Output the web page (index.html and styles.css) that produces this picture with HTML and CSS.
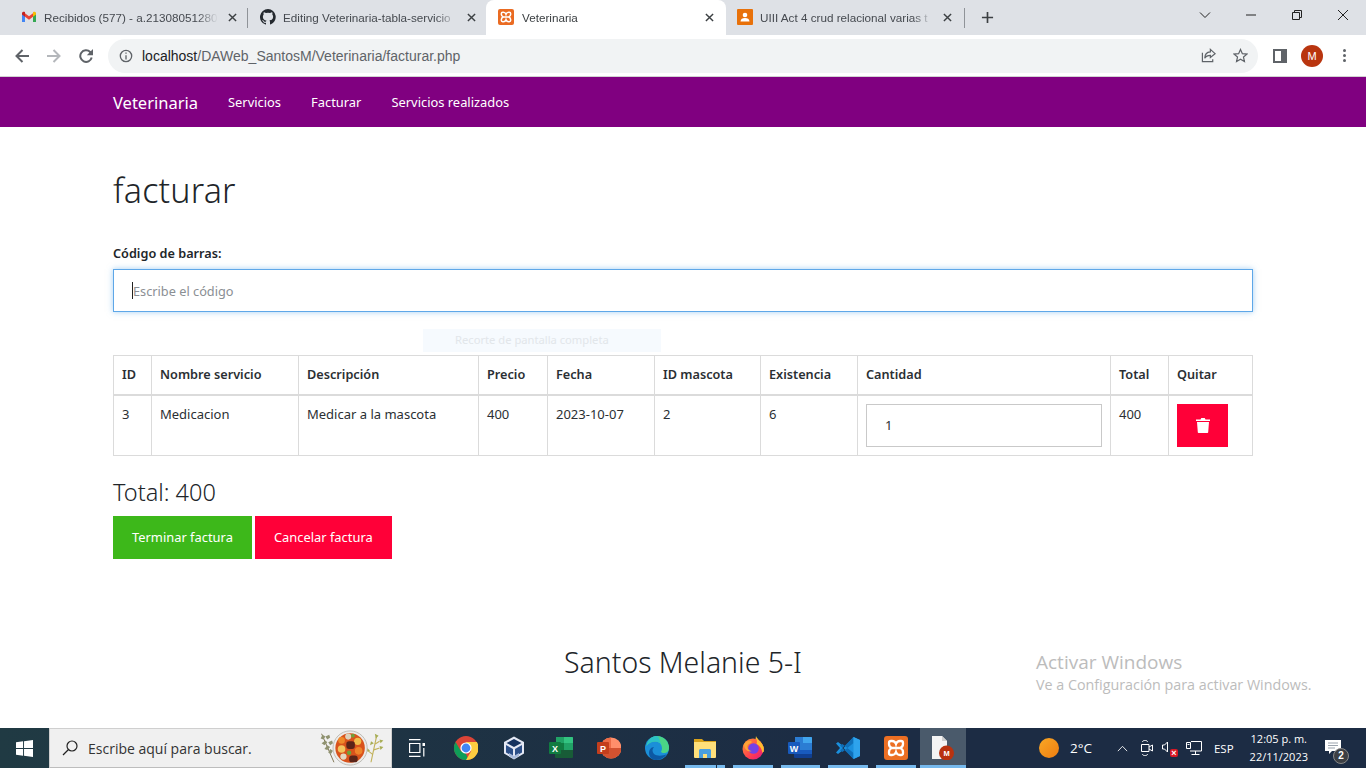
FILE: index.html
```html
<!DOCTYPE html>
<html lang="es">
<head>
<meta charset="utf-8">
<title>Veterinaria</title>
<link rel="stylesheet" href="styles.css">
</head>
<body>
<div class="screen">
  <header class="browser">
    <div class="tabstrip">
      <div class="tab">
        <svg class="fav" viewBox="0 0 16 16"><path fill="#4285f4" d="M1 3.500v9.500h3V6z"/><path fill="#34a853" d="M15 3.500v9.500h-3V6z"/><path fill="#ea4335" d="M4 4.200L8 7.300l4-3.100v3.600L8 10.800 4 7.800z"/><path fill="#c5221f" d="M1 4.500C1 3 2.700 2.300 4 3.200v4.600L1 5.600z"/><path fill="#fbbc04" d="M15 4.500C15 3 13.300 2.300 12 3.200v4.600l3-2.200z"/></svg>
        <span class="tab-title">Recibidos (577) - a.21308051280</span>
        <svg class="tab-x" viewBox="0 0 10 10"><path d="M1 1l8 8M9 1l-8 8"/></svg>
      </div>
      <i class="tab-sep"></i>
      <div class="tab">
        <svg class="fav" viewBox="0 0 16 16"><path fill="#24292f" d="M8 0a8 8 0 0 0-2.500 15.600c.4.100.5-.2.500-.4v-1.400c-2.200.5-2.700-1-2.700-1-.4-.9-.9-1.200-.9-1.200-.7-.5.100-.5.100-.5.800.100 1.200.8 1.200.8.700 1.200 1.900.9 2.300.7.100-.5.300-.9.500-1.100-1.800-.2-3.600-.9-3.600-4 0-.9.300-1.600.8-2.100-.1-.2-.4-1 .1-2.100 0 0 .7-.2 2.200.8a7.500 7.500 0 0 1 4 0c1.500-1 2.200-.8 2.200-.8.400 1.100.200 1.900.100 2.100.500.500.800 1.300.800 2.100 0 3.100-1.900 3.700-3.700 3.900.300.300.600.800.600 1.500v2.200c0 .2.100.5.500.4A8 8 0 0 0 8 0z"/></svg>
        <span class="tab-title">Editing Veterinaria-tabla-servicio</span>
        <svg class="tab-x" viewBox="0 0 10 10"><path d="M1 1l8 8M9 1l-8 8"/></svg>
      </div>
      <div class="tab tab-active">
        <svg class="fav" viewBox="0 0 24 24"><rect width="24" height="24" rx="3" fill="#ea6b22"/><path class="xampp" d="M12 8Q11 5 8 5H7Q5 5 5 7V8Q5 11 8 12 5 13 5 16V17Q5 19 7 19H8Q11 19 12 16 13 19 16 19H17Q19 19 19 17V16Q19 13 16 12 19 11 19 8V7Q19 5 17 5H16Q13 5 12 8ZM8 12H16"/></svg>
        <span class="tab-title">Veterinaria</span>
        <svg class="tab-x" viewBox="0 0 10 10"><path d="M1 1l8 8M9 1l-8 8"/></svg>
      </div>
      <div class="tab tab-last">
        <svg class="fav" viewBox="0 0 16 16"><rect width="16" height="16" rx="1" fill="#e8710a"/><circle cx="8" cy="6" r="2.300" fill="#fff"/><path fill="#fff" d="M3.500 12.500c0-2.500 2-3.500 4.500-3.500s4.500 1 4.500 3.500z"/></svg>
        <span class="tab-title">UIII Act 4 crud relacional varias t</span>
        <svg class="tab-x" viewBox="0 0 10 10"><path d="M1 1l8 8M9 1l-8 8"/></svg>
      </div>
      <i class="tab-sep tab-sep-end"></i>
      <svg class="tab-new" viewBox="0 0 14 14"><path d="M7 1v12M1 7h12"/></svg>
      <div class="winctl">
        <svg class="winbtn" viewBox="0 0 12 12"><path d="M1 3.500l5 5 5-5"/></svg>
        <svg class="winbtn" viewBox="0 0 12 12"><path d="M1 6h10"/></svg>
        <svg class="winbtn" viewBox="0 0 12 12"><path d="M1.500 3.500h7v7h-7zM3.500 3.500v-2h7v7h-2"/></svg>
        <svg class="winbtn" viewBox="0 0 12 12"><path d="M1 1l10 10M11 1L1 11"/></svg>
      </div>
    </div>
    <div class="toolbar">
      <svg class="nav-ic" viewBox="0 0 14 14"><path stroke="#5f6368" d="M14 7H1.500M7.500 1L1.500 7l6 6"/></svg>
      <svg class="nav-ic" viewBox="0 0 14 14"><path stroke="#b4b7bb" d="M0 7h12.500M6.500 1l6 6-6 6"/></svg>
      <svg class="nav-ic" viewBox="0 0 14 14"><path stroke="#5f6368" d="M12.700 8.500A5.800 5.800 0 1 1 11.200 3L13 5"/><path fill="#5f6368" d="M14 0v6.200H7.800z"/></svg>
      <div class="omnibox">
        <svg class="info" viewBox="0 0 16 16"><circle cx="8" cy="8" r="6.500"/><path d="M8 7v5M8 4v1.500"/></svg>
        <span class="url"><span class="url-host">localhost</span>/DAWeb_SantosM/Veterinaria/facturar.php</span>
        <svg class="omni-ic" viewBox="0 0 16 16"><path d="M10 1.500L15 6l-5 4V7.800C7 7.800 5 9 4 11c0-4 2-6.500 6-6.800zM1.500 5v9.500h11V12"/></svg>
        <svg class="omni-ic" viewBox="0 0 16 16"><path d="M8 1.500l2 4.500 4.800.5-3.600 3.200 1 4.800L8 12l-4.200 2.500 1-4.800L1.200 6.500 6 6z"/></svg>
      </div>
      <svg class="side-ic" viewBox="0 0 14 14"><rect x="1" y="1" width="12" height="12" fill="none" stroke="#5f6368" stroke-width="2"/><rect x="8" y="1" width="5" height="12" fill="#5f6368"/></svg>
      <span class="avatar">M</span>
      <span class="menu-dots"><i></i><i></i><i></i></span>
    </div>
  </header>

  <nav class="navbar">
    <a class="brand">Veterinaria</a>
    <a class="nav-link">Servicios</a>
    <a class="nav-link">Facturar</a>
    <a class="nav-link">Servicios realizados</a>
  </nav>

  <main class="content">
    <h1 class="title">facturar</h1>
    <label class="field-label">Código de barras:</label>
    <div class="code-input"><i class="caret"></i><span class="placeholder">Escribe el código</span></div>
    <table class="grid">
      <colgroup>
        <col class="c-id"><col class="c-name"><col class="c-desc"><col class="c-price"><col class="c-date"><col class="c-pet"><col class="c-stock"><col class="c-qty"><col class="c-total"><col class="c-del">
      </colgroup>
      <thead>
        <tr><th>ID</th><th>Nombre servicio</th><th>Descripción</th><th>Precio</th><th>Fecha</th><th>ID mascota</th><th>Existencia</th><th>Cantidad</th><th>Total</th><th>Quitar</th></tr>
      </thead>
      <tbody>
        <tr>
          <td>3</td><td>Medicacion</td><td>Medicar a la mascota</td><td>400</td><td>2023-10-07</td><td>2</td><td>6</td>
          <td><div class="qty">1</div></td>
          <td>400</td>
          <td><div class="btn-del"><svg class="trash" viewBox="0 0 14 16"><path d="M0 2.500h14V4H0zM4.500 2.500L5.300 1h3.400l.8 1.500zM1 5h12l-.8 10.200a.8.800 0 0 1-.8.800H2.600a.8.800 0 0 1-.8-.8z"/></svg></div></td>
        </tr>
      </tbody>
    </table>
    <h3 class="total">Total: 400</h3>
    <div class="actions">
      <a class="btn btn-ok">Terminar factura</a>
      <a class="btn btn-no">Cancelar factura</a>
    </div>
    <footer class="signature">Santos Melanie 5-I</footer>
    <div class="snip-tip">Recorte de pantalla completa</div>
    <div class="activate">
      <div class="activate-a">Activar Windows</div>
      <div class="activate-b">Ve a Configuración para activar Windows.</div>
    </div>
  </main>

  <footer class="taskbar">
    <span class="start"><svg viewBox="0 0 18 18"><path fill="#fff" d="M0 2.500L7.500 1.400V8.500H0zM8.500 1.300L18 0v8.500H8.500zM0 9.500h7.500v7.100L0 15.500zM8.500 9.500H18V18l-9.500-1.300z"/></svg></span>
    <div class="search">
      <svg class="lens" viewBox="0 0 16 16"><circle cx="10" cy="6" r="5"/><path d="M6.500 9.500L1 15"/></svg>
      <span class="search-text">Escribe aquí para buscar.</span>
      <svg class="stew" viewBox="0 0 72 40">
        <path d="M4 5l13 30" stroke="#7d7350" stroke-width="1" fill="none"/>
        <path d="M5 6l-2 4 3 1 2-3zM8 12l-4 3 3 2 3-3zM10 17l-3 4 3 1 3-3zM8 8l4-2 1 3-3 2zM11 14l4-2 1 3-3 2zM13 21l-2 4 3 1 2-3z" fill="#8f9270"/>
        <path d="M62 7l-3 14-3 14M60 16l5-3M59 22l6-2M58 27l-5-4" stroke="#c2b25c" stroke-width="1.200" fill="none"/>
        <path d="M60 5l4 2-3 3zM65 11l4 1-3 3zM65 18l4 1-3 3zM52 20l3 3-4 1zM56 13l3 2-4 2z" fill="#a7ad55"/>
        <circle cx="34" cy="20" r="18" fill="#ecebe8" stroke="#bdbab5"/>
        <circle cx="34" cy="20" r="15.500" fill="#d9531c"/>
        <circle cx="25" cy="12" r="3.500" fill="#ef8a2a"/><circle cx="32" cy="8" r="3.200" fill="#ddd2bc"/><circle cx="37" cy="7" r="2" fill="#6fa33a"/><circle cx="42" cy="13" r="3.800" fill="#f2bd4b"/><rect x="30" y="13" width="9" height="8" rx="3" fill="#5b2418"/><circle cx="25" cy="21" r="4" fill="#f3c45e"/><circle cx="43" cy="23" r="4" fill="#ef842a"/><circle cx="33" cy="25" r="2.300" fill="#6fa33a"/><circle cx="27" cy="29" r="3.300" fill="#e3d8c2"/><rect x="33" y="28" width="9" height="7" rx="3" fill="#5b2418"/>
      </svg>
    </div>
    <span class="tb-view"><svg viewBox="0 0 16 18"><path fill="none" stroke="#fff" stroke-width="1.200" d="M0 .6h11.500M.6 4.500h10.300v9H.6zM0 17.400h11.500M14.800 9v8.500"/><rect x="13.500" y="4" width="3" height="3" fill="#fff"/></svg></span>
    <span class="tb-app"><svg viewBox="0 0 24 24"><circle cx="12" cy="12" r="12" fill="#db4437"/><path fill="#0f9d58" d="M12 24A12 12 0 0 1 1.600 6l5.200 9 5.200 3 2.500 5.700z"/><path fill="#ffcd40" d="M12 6h10.900A12 12 0 0 1 12 24l5.200-9z"/><circle cx="12" cy="12" r="5.600" fill="#fff"/><circle cx="12" cy="12" r="4.400" fill="#4285f4"/></svg></span>
    <span class="tb-app"><svg viewBox="0 0 24 24"><path fill="#e4e8f4" d="M12 .5l10 5.500v11.500L12 23.500 2 17.500V6z"/><path fill="#14315f" d="M12 3l7.500 4-7.500 4-7.500-4z"/><path fill="#2c4f88" d="M4 9l7 4v7.500l-7-4zM20 9l-7 4v7.500l7-4z"/><path fill="#a9bbdc" d="M7 17l5 3 5-3 0 3-5 3-5-3z"/></svg></span>
    <span class="tb-app"><svg viewBox="0 0 24 24"><path fill="#21a366" d="M7 1h16a1 1 0 0 1 1 1v5H7z"/><path fill="#33c481" d="M15 1h8a1 1 0 0 1 1 1v5h-9z"/><rect x="6" y="7" width="18" height="7" fill="#107c41"/><rect x="15" y="7" width="9" height="7" fill="#21a366"/><path fill="#185c37" d="M6 14h18v7a1 1 0 0 1-1 1H7a1 1 0 0 1-1-1z"/><rect y="6" width="12" height="12" rx="1" fill="#107c41"/><text class="ic-letter" x="6" y="15.500">X</text></svg></span>
    <span class="tb-app"><svg viewBox="0 0 24 24"><circle cx="14" cy="12" r="10.500" fill="#ff8f6b"/><path fill="#d35230" d="M14 12h10.500A10.500 10.500 0 0 1 3.500 12z"/><path fill="#ed6c47" d="M14 12V1.500A10.500 10.500 0 0 0 3.500 12z"/><rect y="6" width="12" height="12" rx="1" fill="#c43e1c"/><text class="ic-letter" x="6" y="15.500">P</text></svg></span>
    <span class="tb-app"><svg viewBox="0 0 24 24"><circle cx="12" cy="12" r="12" fill="#1b8fd8"/><path fill="#4bd486" d="M12 0a12 12 0 0 1 12 12c0 3-2 5-5 5-2 0-3-.6-3-1.500 0-.5 1-.8 1-3C17 8 14 5.500 10 5.500 6.500 5.500 3.500 7 1.500 10 2.500 4 7 0 12 0z"/><path fill="#2cc2c6" d="M12 0C7 0 2.500 4 1.500 10 3.500 7 6.500 5.500 10 5.500c3 0 5.500 1.500 6.500 4C15 5 14 1 12 0z"/><path fill="#0c59a4" d="M22 18c-3 4-7 6-11 6-4 0-7-3-7-7 0-3 2-6 5-6-2 2-2 5 0 7 3 2.500 9 2 13 0z"/></svg></span>
    <span class="tb-app tb-app-split"><svg viewBox="0 0 24 24"><path fill="#d9a21b" d="M1 3h8l2 2h12v4H1z"/><path fill="#ffdf7a" d="M1 6h22v15a1 1 0 0 1-1 1H2a1 1 0 0 1-1-1z"/><path fill="#4a9fe0" d="M6 22v-8l1-1h10l1 1v8h-4v-4h-4v4z"/></svg></span>
    <span class="tb-app"><svg viewBox="0 0 24 24"><defs><linearGradient id="fx" x1="0" y1="0" x2="1" y2="1"><stop offset="0" stop-color="#ff9a2e"/><stop offset=".6" stop-color="#ff3d50"/><stop offset="1" stop-color="#e31587"/></linearGradient></defs><path fill="#ffd03a" d="M15 0c.5 3 6 6 7.500 11 .5 2 .5 4 0 5H13z"/><circle cx="12" cy="13" r="10.500" fill="url(#fx)"/><path fill="#ffbd2e" d="M15 0c.5 3 6 6 7.500 11 .5 2 0 5-1 6-1-6-4-8-6-9 1-2 0-5-.5-8z"/><circle cx="12.500" cy="12.500" r="5.300" fill="#7542e5"/><path fill="#ffa436" d="M3 8c2-3 5-4 7-3 1 .5 1 1.500 0 2-2 1-4 1.500-3.500 4.500.3 2 2 3.500 4.500 3.500-3.500 1.500-8-1-8-7z"/></svg></span>
    <span class="tb-app"><svg viewBox="0 0 24 24"><path fill="#2b7cd3" d="M7 1h16a1 1 0 0 1 1 1v5H7z"/><path fill="#41a5ee" d="M15 1h8a1 1 0 0 1 1 1v5h-9z"/><rect x="6" y="7" width="18" height="7" fill="#2b7cd3"/><rect x="6" y="14" width="18" height="4" fill="#185abd"/><path fill="#103f91" d="M6 18h18v3a1 1 0 0 1-1 1H7a1 1 0 0 1-1-1z"/><rect y="6" width="12" height="12" rx="1" fill="#185abd"/><text class="ic-letter" x="6" y="15.500">W</text></svg></span>
    <span class="tb-app"><svg viewBox="0 0 24 24"><path fill="#1a8fdd" d="M6.500 14.500L2 18l-2-1.500L4 12 0 7.500 2 6l4.500 3.500zM17.500 1L24 4v16l-6.500 3L7.500 12z"/><path fill="#0f6fb8" d="M17.500 23L4 9.500 6.500 8 17.500 17zM17.500 1L4 14.500 6.500 16 17.500 7z"/><path fill="#2ea3ec" d="M17.500 1L24 4v16l-6.500 3z"/></svg></span>
    <span class="tb-app"><svg viewBox="0 0 24 24"><rect width="24" height="24" rx="3" fill="#ec6f23"/><path class="xampp" d="M12 8Q11 5 8 5H7Q5 5 5 7V8Q5 11 8 12 5 13 5 16V17Q5 19 7 19H8Q11 19 12 16 13 19 16 19H17Q19 19 19 17V16Q19 13 16 12 19 11 19 8V7Q19 5 17 5H16Q13 5 12 8ZM8 12H16"/></svg></span>
    <span class="tb-app tb-app-active"><svg viewBox="0 0 24 24"><path fill="#f4f4f4" d="M1 0h10l5 5v18H1z"/><path fill="#cfcfcf" d="M11 0l5 5h-5z"/><circle cx="15.500" cy="17" r="7.500" fill="#b9320f"/><text class="ic-m" x="15.500" y="19.800">M</text></svg></span>
    <div class="tray">
      <i class="sun"></i>
      <span class="temp">2°C</span>
      <svg class="tray-ic tray-chev" viewBox="0 0 12 8"><path d="M.7 7L6 1.500 11.300 7"/></svg>
      <svg class="tray-ic tray-meet" viewBox="0 0 12 16"><path d="M1.500 2c0-1 1-1.500 2-1.500h1c1 0 2 .5 2 1.500M1.500 14c0 1 1 1.500 2 1.500h1c1 0 2-.5 2-1.500M.5 4.500h7.500v7H.5zM8 7l3.500-2v6L8 9"/></svg>
      <span class="tray-sound"><svg class="tray-ic tray-spk" viewBox="0 0 6 12"><path d="M.5 4h2L5.500 1v10L2.500 8h-2z"/></svg><i class="mute">×</i></span>
      <svg class="tray-ic tray-net" viewBox="0 0 16 14"><path d="M5 .5h10.500v9.500H4M9.500 10v3M5.500 13.500h8M.5 1.500h4v6h-4zM1.500 3.500h2"/></svg>
      <span class="lang">ESP</span>
      <span class="clock"><span>12:05 p. m.</span><span>22/11/2023</span></span>
      <span class="notif"><svg viewBox="0 0 16 14"><path fill="#fff" d="M0 0h16v11H7l-3 3v-3H0z"/><path stroke="#9aa3ad" d="M3 3h10M3 5.500h10M3 8h7"/></svg><b class="notif-n">2</b></span>
    </div>
  </footer>
</div>
</body>
</html>
```

FILE: styles.css
```css
* { box-sizing: border-box; }
html, body { margin: 0; padding: 0; }
body { font-family: "Noto Sans", "Open Sans", sans-serif; color: #212529; background: #fff; }
.screen { width: 1366px; height: 768px; display: flex; flex-direction: column; overflow: hidden; }

/* browser chrome */
.browser { font-family: "Liberation Sans", Arial, sans-serif; flex: none; }
.tabstrip { height: 35px; background: #dee1e6; display: flex; align-items: center; padding-left: 9px; }
.tab { width: 238px; height: 35px; display: flex; align-items: center; padding: 0 6px 1px 12px; flex: none; }
.tab-active { width: 240px; background: #fff; border-radius: 8px 8px 0 0; padding: 0 8px 1px 12px; }
.tab-last { padding: 0 8px 1px 11px; }
.fav { width: 16px; height: 16px; flex: none; margin-right: 7px; }
.tab-title { flex: 1; font-size: 11.700px; color: #45494f; white-space: nowrap; overflow: hidden; min-width: 0;
  -webkit-mask-image: linear-gradient(90deg, #000 88%, transparent); mask-image: linear-gradient(90deg, #000 88%, transparent); }
.tab-active .tab-title { color: #3c4043; margin-left: 1px; }
.tab-x { width: 9px; height: 9px; flex: none; margin: 0 4px 0 10px; fill: none; stroke: #3c4043; stroke-width: 1.600; }
.xampp { fill: none; stroke: #fff; stroke-width: 2.300; }
.tab-sep { width: 1px; height: 20px; background: #8f9398; flex: none; }
.tab-new { width: 13px; height: 13px; margin-left: 16px; fill: none; stroke: #3c4043; stroke-width: 1.800; flex: none; }
.winctl { margin-left: auto; display: flex; align-items: center; gap: 34px; padding-right: 17px; padding-bottom: 5px; }
.winbtn { width: 12px; height: 12px; fill: none; stroke: #222; stroke-width: 1; }

.toolbar { height: 42px; background: #fff; border-bottom: 1px solid #d2d2d2; display: flex; align-items: center; padding-left: 15px; }
.nav-ic { width: 14px; height: 14px; margin-right: 18px; fill: none; stroke-width: 2; flex: none; }
.omnibox { width: 1150px; height: 34px; margin-left: -3px; border-radius: 17px; background: #f1f3f4; display: flex; align-items: center; padding: 0 10px 0 11px; flex: none; }
.info { width: 14px; height: 14px; fill: none; stroke: #5f6368; stroke-width: 1.500; margin-right: 9px; flex: none; }
.url { font-size: 14px; color: #5f6368; flex: 1; }
.url-host { color: #202124; }
.omni-ic { width: 15px; height: 15px; fill: none; stroke: #5f6368; stroke-width: 1.300; margin-left: 17px; flex: none; }
.side-ic { width: 14px; height: 14px; margin-left: 15px; flex: none; }
.avatar { width: 22px; height: 22px; margin-left: 14px; border-radius: 50%; background: #b9350f; color: #fff; font-size: 11px; display: flex; align-items: center; justify-content: center; flex: none; }
.menu-dots { margin-left: 20px; display: flex; flex-direction: column; gap: 2px; }
.menu-dots i { width: 3px; height: 3px; border-radius: 50%; background: #5f6368; display: block; }

/* navbar */
.navbar { height: 50px; background: #800080; color: #fff; display: flex; align-items: center; padding-left: 113px; flex: none; }
.brand { font-size: 16.500px; margin-right: 30px; }
.nav-link { font-size: 12.900px; margin-right: 30px; }

/* content */
.content { position: relative; flex: 1; padding: 0 113px; min-height: 0; }
.title { font-size: 34px; font-weight: 300; margin: 42px 0 0; line-height: 42px; letter-spacing: .2px; }
.field-label { display: block; font-size: 12.700px; font-weight: 600; margin-top: 32px; line-height: 20px; }
.code-input { height: 43px; margin-top: 6px; border: 1px solid #5ea7e8; box-shadow: 0 0 6px rgba(90,167,232,.55); display: flex; align-items: center; padding-left: 18px; }
.caret { width: 1px; height: 17px; background: #222; }
.placeholder { font-size: 12.750px; color: #8b8f94; }

.grid { width: 1139px; table-layout: fixed; border-collapse: collapse; margin-top: 43px; font-size: 13px; color: #2b2f33; }
.c-id { width: 38px; } .c-name { width: 147px; } .c-desc { width: 180px; } .c-price { width: 69px; } .c-date { width: 107px; }
.c-pet { width: 106px; } .c-stock { width: 97px; } .c-qty { width: 253px; } .c-total { width: 58px; } .c-del { width: 84px; }
.grid th, .grid td { border: 1px solid #dbdbdb; padding: 8px; text-align: left; vertical-align: top; line-height: 20px; }
.grid th { font-weight: 600; font-size: 12.700px; height: 39px; border-bottom-width: 2px; }
.grid td { height: 60px; }
.qty { height: 43px; border: 1px solid #c9c9c9; padding-left: 18px; display: flex; align-items: center; }
.btn-del { width: 51px; height: 43px; background: #ff0038; display: flex; align-items: center; justify-content: center; }
.trash { width: 14px; height: 16px; fill: #fff; }

.total { font-size: 23.500px; font-weight: 300; margin: 21px 0 0; line-height: 30px; }
.actions { display: flex; gap: 3px; margin-top: 9px; }
.btn { height: 43px; display: flex; align-items: center; padding: 0 19px 1px; font-size: 12.900px; color: #fff; }
.btn-ok { background: #3db81a; }
.btn-no { background: #ff0038; }
.signature { font-size: 28.400px; font-weight: 300; text-align: center; margin-top: 85px; line-height: 36px; }

.snip-tip { position: absolute; left: 423px; top: 202px; width: 238px; height: 23px; background: #f6fafe; color: #e2e6ea; font-size: 11.200px; display: flex; align-items: center; padding: 0 0 2px 32px; }
.activate { position: absolute; left: 1036px; top: 522px; font-family: "Open Sans", sans-serif; color: #bcbcbc; }
.activate-a { font-size: 19px; line-height: 26px; }
.activate-b { font-size: 14.300px; line-height: 20px; }

/* taskbar */
.taskbar { height: 40px; flex: none; display: flex; align-items: center; color: #fff; background: linear-gradient(90deg, #203a43, #1c2c44 60%); font-family: "Open Sans", sans-serif; }
.start { width: 49px; display: flex; justify-content: center; }
.start svg { width: 17px; height: 17px; }
.search { width: 343px; height: 40px; background: #f0f0f0; border: 1px solid #cfcfcf; border-bottom-color: #bdbdbd; display: flex; align-items: center; padding-left: 12px; flex: none; }
.lens { width: 16px; height: 16px; fill: none; stroke: #222; stroke-width: 1.200; flex: none; }
.search-text { color: #333; font-size: 14px; margin-left: 10px; flex: 1; }
.stew { width: 72px; height: 38px; margin-right: 3px; flex: none; }
.tb-view { width: 50px; display: flex; justify-content: center; flex: none; }
.tb-view svg { width: 16px; height: 18px; }
.tb-app { width: 47.800px; height: 40px; display: flex; align-items: center; justify-content: center; flex: none; position: relative; }
.tb-app svg { width: 24px; height: 24px; }
.tb-app:nth-of-type(n+8)::after { content: ""; position: absolute; left: 4px; right: 4px; bottom: 0; height: 3px; background: #76b9ed; }
.tb-app-split::before { content: ""; position: absolute; left: 35px; width: 1px; bottom: 0; height: 3px; background: #1c2c44; z-index: 1; }
.tb-app-active { width: 46px; background: #4a5a6b; }
.tb-app-active::after { left: 0 !important; right: 0 !important; }
.ic-letter { font: 700 9px "Liberation Sans", sans-serif; fill: #fff; text-anchor: middle; }
.ic-m { font: 700 7.500px "Liberation Sans", sans-serif; fill: #fff; text-anchor: middle; }
.tray { flex: 1; height: 40px; display: flex; align-items: center; padding-left: 73px; position: relative; }
.sun { width: 20px; height: 20px; border-radius: 50%; background: linear-gradient(135deg, #f9a825, #ee7d11); flex: none; }
.temp { font-size: 13.500px; margin-left: 11px; width: 37px; }
.tray-ic { fill: none; stroke: #fff; stroke-width: 1; flex: none; }
.tray-chev { width: 11px; height: 7px; margin-left: 10px; }
.tray-meet { width: 12px; height: 16px; margin-left: 13px; }
.tray-sound { position: relative; width: 16px; height: 16px; margin-left: 9px; display: block; flex: none; }
.tray-spk { width: 6px; height: 12px; display: block; margin-top: 1px; }
.mute { position: absolute; left: 8px; bottom: -1px; width: 8px; height: 8px; border-radius: 2px; background: #d81824; font: 700 9px/8px "Liberation Sans", sans-serif; text-align: center; }
.tray-net { width: 16px; height: 14px; margin-left: 8px; }
.lang { font-size: 11.500px; margin-left: 12px; }
.clock { display: flex; flex-direction: column; align-items: center; font-size: 11px; line-height: 18px; margin-left: 16px; }
.notif { position: absolute; right: 25px; top: 12px; width: 16px; height: 14px; }
.notif svg { width: 16px; height: 14px; display: block; }
.notif-n { position: absolute; left: 8px; top: 8px; width: 16px; height: 16px; border-radius: 50%; background: #3c3f44; border: 1px solid #888; font: 700 10px/14px "Liberation Sans", sans-serif; text-align: center; }
```
